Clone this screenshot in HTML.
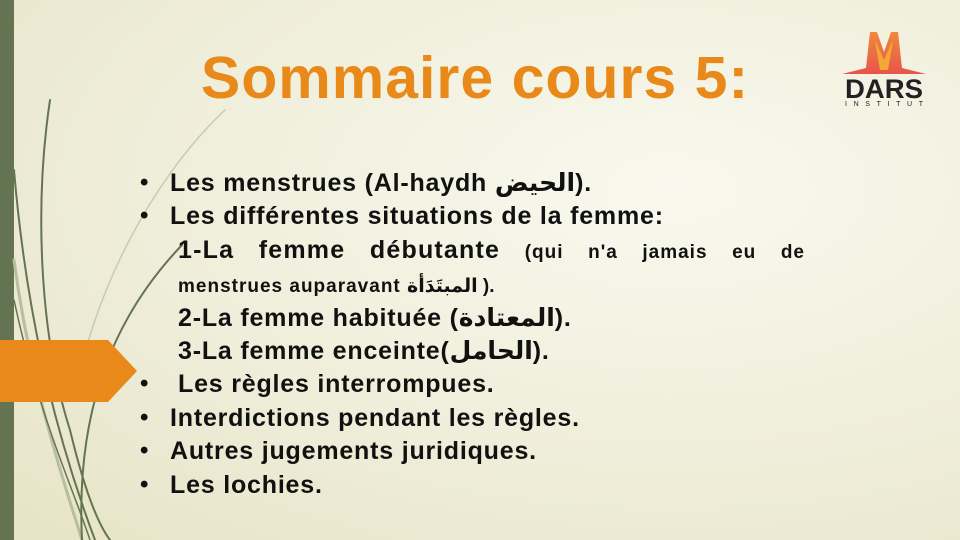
<!DOCTYPE html>
<html><head><meta charset="utf-8"><style>
html,body{margin:0;padding:0}
body{width:960px;height:540px;position:relative;overflow:hidden;
background:radial-gradient(ellipse at 70% 35%,#f8f8ee 0%,#f0efdc 50%,#e6e3c6 100%);
font-family:"Liberation Sans","DejaVu Sans",sans-serif;}
.bar{position:absolute;left:0;top:0;width:14px;height:540px;background:#647453}
h1{position:absolute;left:180px;width:590px;top:44px;margin:0;text-align:center;font-size:59px;font-weight:bold;color:#e8891a;letter-spacing:1px}
.l{position:absolute;font-weight:bold;font-size:25px;letter-spacing:0.8px;color:#111;white-space:nowrap;line-height:30px}
.b{position:absolute;left:140px;font-size:24px;font-weight:bold;color:#111}
.j{position:absolute;left:178px;width:627px;font-weight:bold;font-size:25px;letter-spacing:1.2px;color:#111;text-align:justify;text-align-last:justify;line-height:30px;white-space:nowrap}
.s{font-size:19px;letter-spacing:1px}
</style></head><body>
<div class="bar"></div>
<svg width="960" height="540" style="position:absolute;left:0;top:0">
<g fill="none" stroke-linecap="round">
<path d="M50 100 C35 200 38 330 70 430 C82 480 95 520 110 540" stroke="#647453" stroke-width="2"/>
<path d="M14 170 C25 300 50 420 95 540" stroke="#647453" stroke-width="2"/>
<path d="M14 260 C30 380 60 470 82 540" stroke="#b8bea0" stroke-width="3"/>
<path d="M182 245 C120 310 75 400 82 540" stroke="#647453" stroke-width="2"/>
<path d="M225 110 C150 180 90 300 75 400" stroke="#c8cbb0" stroke-width="1.5"/>
<path d="M14 300 C40 420 70 480 90 540" stroke="#647453" stroke-width="1.5"/>
</g>
<polygon points="0,340 108,340 137,371 108,402 0,402" fill="#e8891a"/>
</svg>
<h1>Sommaire cours 5:</h1>
<svg width="96" height="92" style="position:absolute;left:836px;top:26px" viewBox="0 0 96 92">
<defs><linearGradient id="g" x1="0" y1="0" x2="0" y2="1"><stop offset="0" stop-color="#f08a3a"/><stop offset="1" stop-color="#e8544a"/></linearGradient></defs>
<path d="M6 48 L30 42 L34 6 L41 6 L48 26 L55 6 L62 6 L66 42 L90 48 Z" fill="url(#g)"/>
<path d="M39 14 L48 34 L57 14 L52 44 L44 44 Z" fill="#f5a83a"/>
<text x="48" y="72" text-anchor="middle" font-family="Liberation Sans" font-weight="bold" font-size="27" fill="#222" textLength="78" lengthAdjust="spacingAndGlyphs">DARS</text>
<text x="48" y="80" text-anchor="middle" font-family="Liberation Sans" font-size="7" fill="#222" textLength="78" lengthAdjust="spacing">INSTITUT</text>
</svg>
<div class="b" style="top:169px">•</div>
<div class="l" style="left:170px;top:168px">Les menstrues (Al-haydh الحيض).</div>
<div class="b" style="top:202px">•</div>
<div class="l" style="left:170px;top:201px">Les différentes situations de la femme:</div>
<div class="j" style="top:235px">1-La femme débutante <span class="s">(qui</span> <span class="s">n'a</span> <span class="s">jamais</span> <span class="s">eu</span> <span class="s">de</span></div>
<div class="l" style="left:178px;top:269px"><span class="s">menstrues auparavant المبتَدَأة ).</span></div>
<div class="l" style="left:178px;top:303px">2-La femme habituée (المعتادة).</div>
<div class="l" style="left:178px;top:336px">3-La femme enceinte(الحامل).</div>
<div class="b" style="top:370px">•</div>
<div class="l" style="left:178px;top:369px">Les règles interrompues.</div>
<div class="b" style="top:404px">•</div>
<div class="l" style="left:170px;top:403px">Interdictions pendant les règles.</div>
<div class="b" style="top:437px">•</div>
<div class="l" style="left:170px;top:436px">Autres jugements juridiques.</div>
<div class="b" style="top:471px">•</div>
<div class="l" style="left:170px;top:470px">Les lochies.</div>
</body></html>
